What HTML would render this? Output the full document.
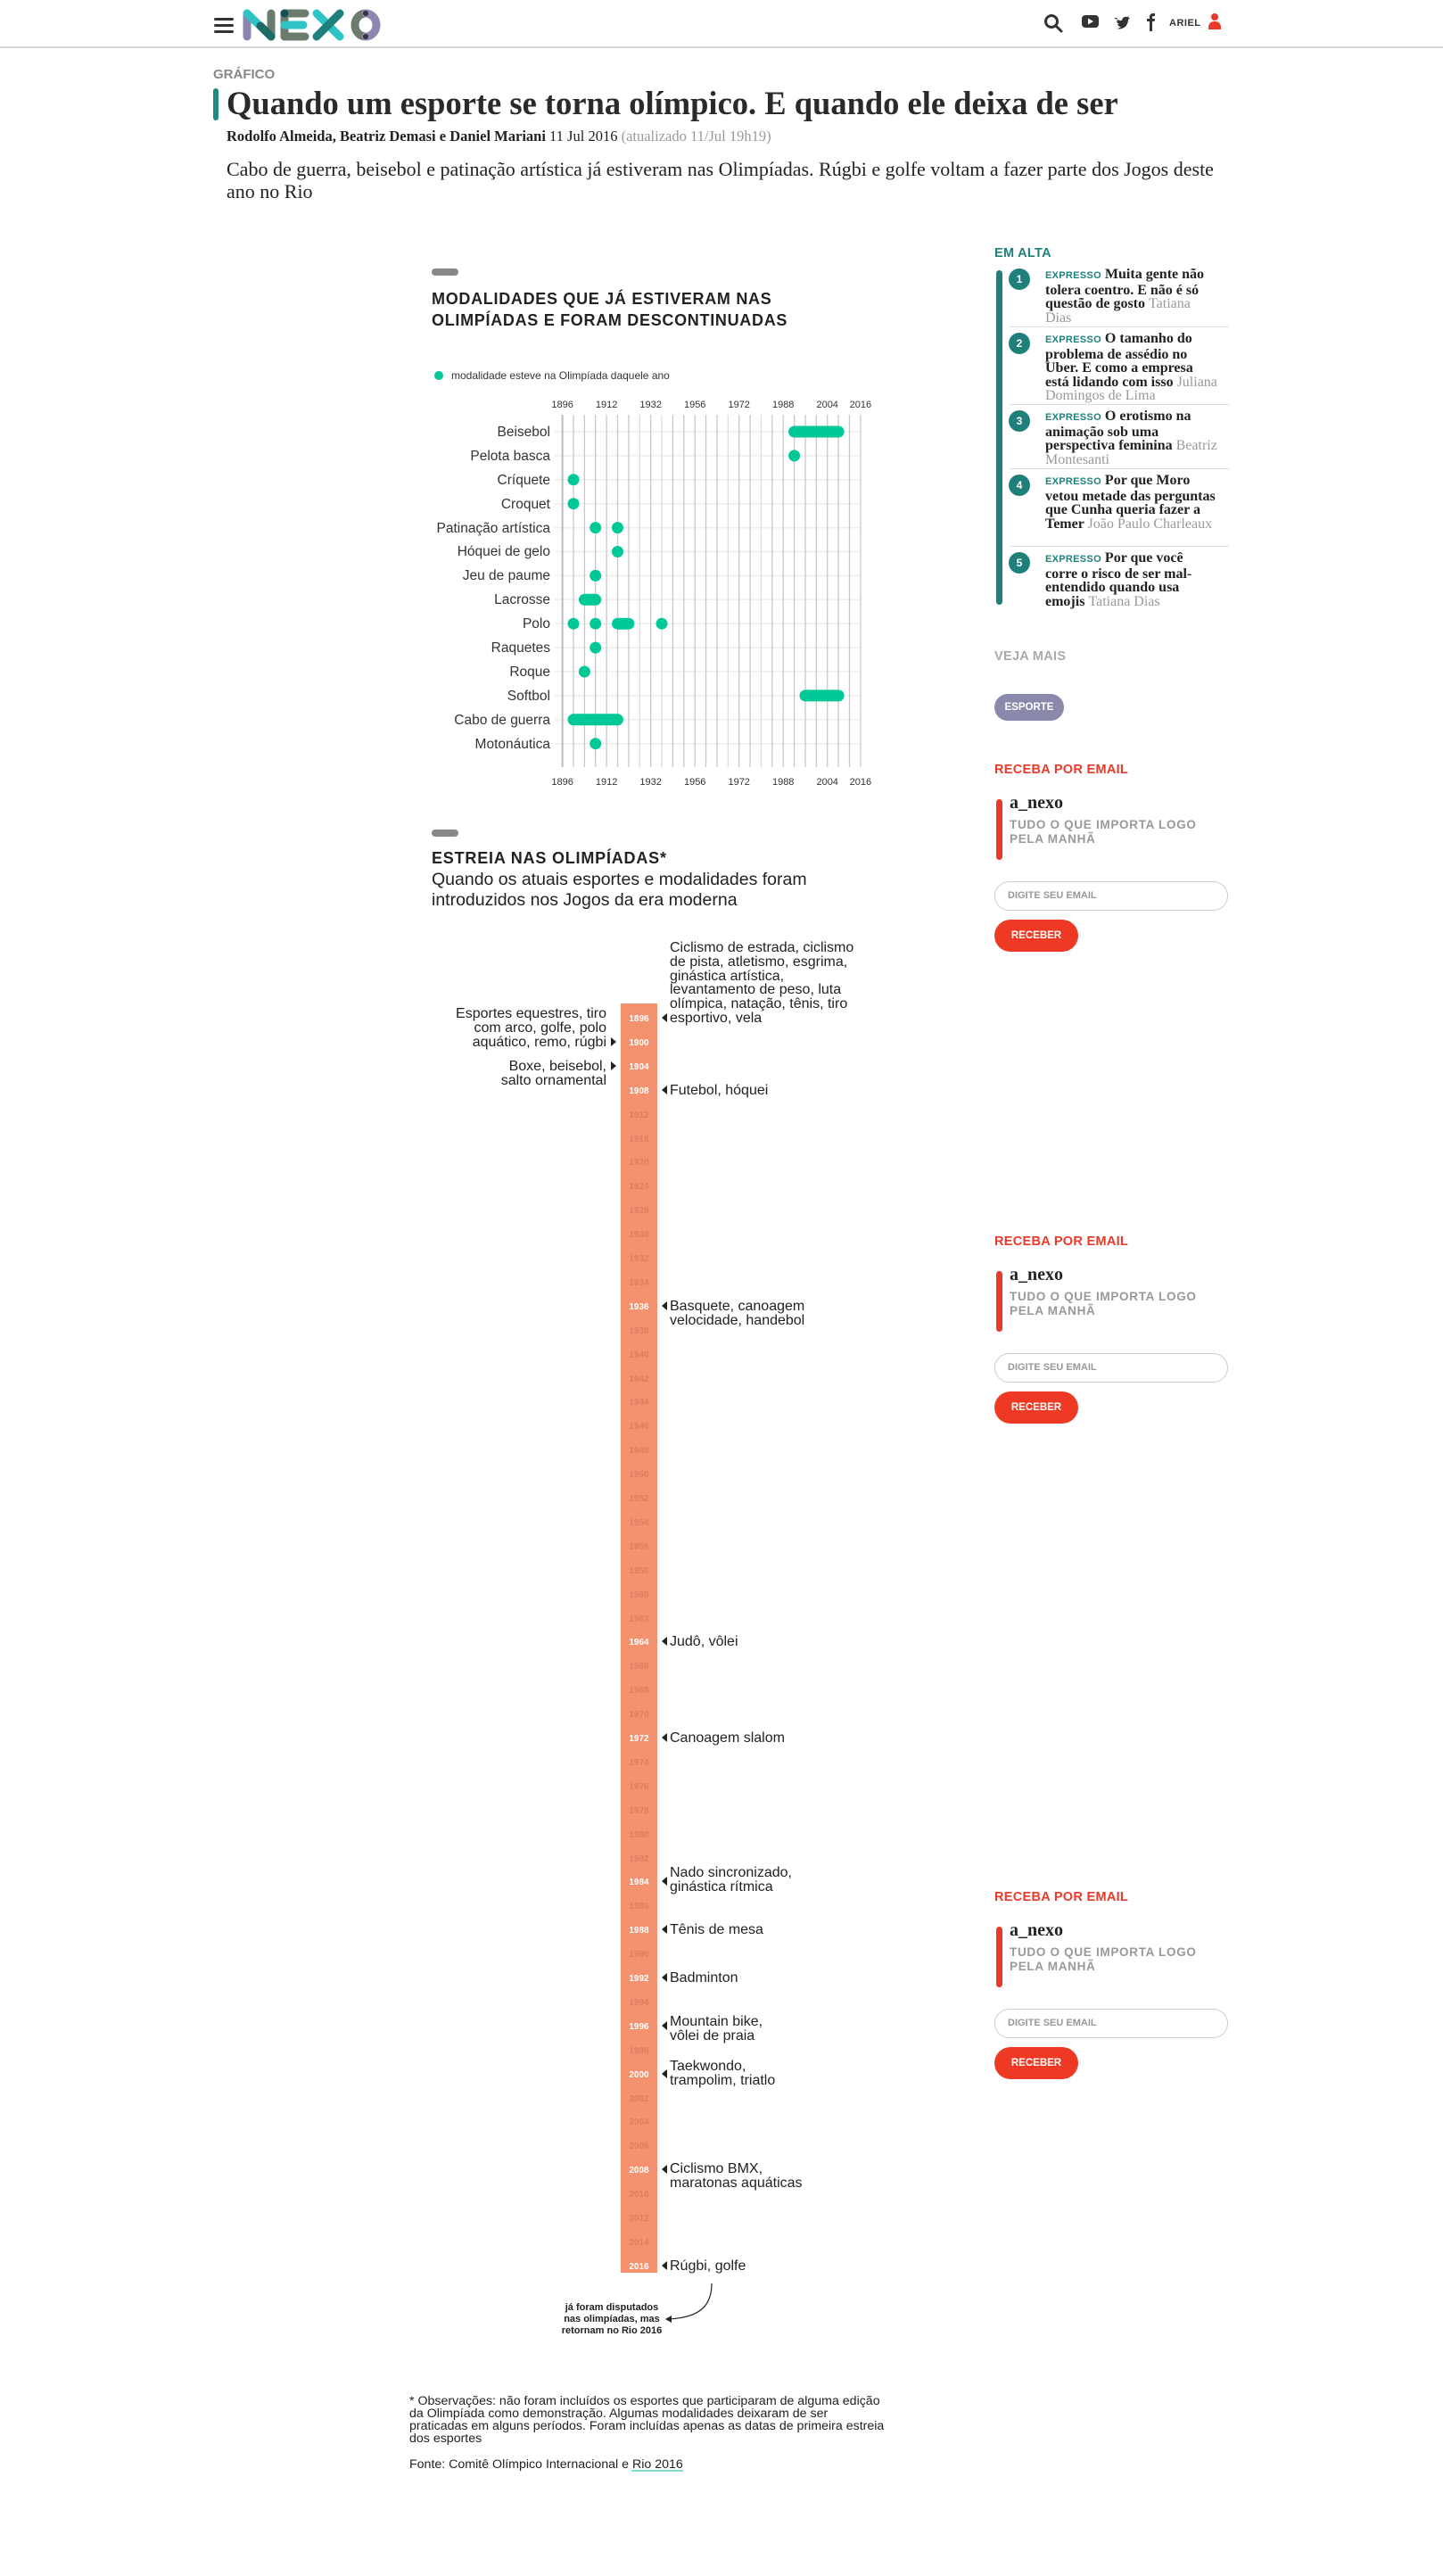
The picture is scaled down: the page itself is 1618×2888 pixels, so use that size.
<!DOCTYPE html>
<html><head><meta charset="utf-8">
<style>
*{margin:0;padding:0;box-sizing:border-box}
body{width:1618px;height:2888px;position:relative;background:#fff;font-family:"Liberation Sans",sans-serif;color:#222;overflow:hidden}
.a{position:absolute}
.serif{font-family:"Liberation Serif",serif}
.hdr{left:0;top:0;width:1618px;height:54px;border-bottom:2px solid #d6d6d6}
.item{position:absolute;left:1172px;width:194px;font-family:"Liberation Serif",serif;font-weight:bold;font-size:16px;line-height:15.5px;color:#222}
.item .ex{font-family:"Liberation Sans",sans-serif;color:#1f7f7a;font-size:11px;letter-spacing:.3px}
.item .au{font-weight:normal;color:#999}
.num{position:absolute;left:1131px;width:24px;height:24px;border-radius:50%;background:#1f7f7a;color:#fff;font-weight:bold;font-size:12px;text-align:center;line-height:24px}
.sep{position:absolute;left:1132px;width:246px;height:1px;background:#ddd}
.h{font-weight:bold;font-size:14.5px;letter-spacing:.3px}
</style></head><body>

<div class="a hdr"></div>
<div class="a" style="left:240px;top:20px;width:22px;height:3px;background:#333;border-radius:2px"></div>
<div class="a" style="left:240px;top:27px;width:22px;height:3px;background:#333;border-radius:2px"></div>
<div class="a" style="left:240px;top:34px;width:22px;height:3px;background:#333;border-radius:2px"></div>
<svg class="a" style="left:268px;top:6px" width="162" height="44" viewBox="0 0 162 44">
 <g stroke-linecap="round" stroke-width="9" fill="none">
  <line x1="9" y1="9" x2="9" y2="35" stroke="#8b87b0"/>
  <line x1="9" y1="9" x2="36" y2="35" stroke="#2ec4c6"/>
  <line x1="36" y1="9" x2="36" y2="35" stroke="#6b7c6f"/>
  <line x1="24" y1="23" x2="36" y2="35" stroke="#1d6b63"/>
  <line x1="51" y1="9" x2="51" y2="35" stroke="#6b7c6f"/>
  <line x1="51" y1="9" x2="74" y2="9" stroke="#6b7c6f"/>
  <line x1="51" y1="22" x2="72" y2="22" stroke="#2ec4c6"/>
  <line x1="51" y1="35" x2="74" y2="35" stroke="#6b7c6f"/>
  <line x1="87" y1="9" x2="113" y2="35" stroke="#2ec4c6"/>
  <line x1="113" y1="9" x2="87" y2="35" stroke="#1f7f7a"/>
  <path d="M142 9 A12 13 0 0 0 142 35" stroke="#6b7c6f"/>
  <path d="M142 9 A12 13 0 0 1 142 35" stroke="#8b87b0"/>
  <circle cx="142" cy="9" r="3" fill="#333" stroke="none"/>
  <circle cx="142" cy="35" r="3" fill="#333" stroke="none"/>
 </g>
 <circle cx="51" cy="9" r="4.5" fill="#134f55"/>
</svg>
<svg class="a" style="left:1170px;top:14px" width="205" height="26" viewBox="0 0 205 26">
 <circle cx="9" cy="10" r="6.5" fill="none" stroke="#333" stroke-width="3"/>
 <line x1="14" y1="15" x2="20" y2="21" stroke="#333" stroke-width="3" stroke-linecap="round"/>
 <rect x="43" y="3" width="19" height="14" rx="4" fill="#333"/>
 <path d="M50 6.5 L56 10 L50 13.5Z" fill="#fff"/>
 <path d="M79 6 c3 2 6 3 9 3 c0-3 3-5 6-4 l2-1 -1 2 2 0 -2 2 c0 7-6 12-13 10 c2 0 4-1 5-2 c-2 0-3-1-4-3 h2 c-2-1-3-2-3-4 l2 1 c-2-2-2-3-1-4z" fill="#333"/>
 <path d="M119 21 V10 H116 V7 H119 V5 C119 2 121 1 123 1 H125 V4 H123.5 C122.5 4 122 4.5 122 5.5 V7 H125 L124.5 10 H122 V21Z" fill="#333"/>
 <text x="141" y="15" font-family="Liberation Sans" font-weight="bold" font-size="11" fill="#333" letter-spacing=".5">ARIEL</text>
 <circle cx="192" cy="5" r="4" fill="#e8392a"/>
 <path d="M185 17 c0-5 3-7 7-7 s7 2 7 7 v2 h-14z" fill="#e8392a"/>
</svg>

<div class="a" style="left:239px;top:75px;font-size:15px;font-weight:bold;color:#888">GRÁFICO</div>
<div class="a" style="left:239px;top:99px;width:6px;height:36px;background:#1f8a80;border-radius:3px"></div>
<div class="a serif" style="left:254px;top:94px;font-size:36.5px;font-weight:bold;color:#2a2a2a;white-space:nowrap">Quando um esporte se torna olímpico. E quando ele deixa de ser</div>
<div class="a serif" style="left:254px;top:143px;font-size:16.5px;white-space:nowrap"><b>Rodolfo Almeida, Beatriz Demasi e Daniel Mariani</b> 11 Jul 2016 <span style="color:#999">(atualizado 11/Jul 19h19)</span></div>
<div class="a serif" style="left:254px;top:177px;width:1110px;font-size:22px;line-height:25px;color:#222">Cabo de guerra, beisebol e patinação artística já estiveram nas Olimpíadas. Rúgbi e golfe voltam a fazer parte dos Jogos deste ano no Rio</div>

<svg class="a" style="left:0;top:0" width="1100" height="2888" viewBox="0 0 1100 2888" font-family="Liberation Sans, sans-serif">
 <rect x="484" y="301" width="30" height="8" rx="4" fill="#888"/>
 <text x="484" y="341" font-size="18" font-weight="bold" fill="#222" letter-spacing=".7">MODALIDADES QUE JÁ ESTIVERAM NAS</text>
 <text x="484" y="365" font-size="18" font-weight="bold" fill="#222" letter-spacing=".7">OLIMPÍADAS E FORAM DESCONTINUADAS</text>
 <circle cx="492" cy="421" r="5" fill="#00c896"/>
 <text x="506" y="425" font-size="12" fill="#333">modalidade esteve na Olimpíada daquele ano</text>
 <g stroke="#eee" stroke-width="1.5">
  <line x1="622" x2="965" y1="484" y2="484"/><line x1="622" x2="965" y1="510.9" y2="510.9"/><line x1="622" x2="965" y1="537.8" y2="537.8"/><line x1="622" x2="965" y1="564.7" y2="564.7"/><line x1="622" x2="965" y1="591.6" y2="591.6"/><line x1="622" x2="965" y1="618.5" y2="618.5"/><line x1="622" x2="965" y1="645.4" y2="645.4"/><line x1="622" x2="965" y1="672.3" y2="672.3"/><line x1="622" x2="965" y1="699.2" y2="699.2"/><line x1="622" x2="965" y1="726.1" y2="726.1"/><line x1="622" x2="965" y1="753" y2="753"/><line x1="622" x2="965" y1="779.9" y2="779.9"/><line x1="622" x2="965" y1="806.8" y2="806.8"/><line x1="622" x2="965" y1="833.7" y2="833.7"/>
 </g>
 <g stroke="#c8c8c8" stroke-width="1.3">
  <line x1="630.6" x2="630.6" y1="465" y2="860" stroke="#bbb" stroke-width="2"/>
  <line x1="643" x2="643" y1="465" y2="860"/><line x1="655.4" x2="655.4" y1="465" y2="860"/><line x1="667.7" x2="667.7" y1="465" y2="860"/><line x1="680.1" x2="680.1" y1="465" y2="860"/><line x1="692.5" x2="692.5" y1="465" y2="860"/><line x1="704.9" x2="704.9" y1="465" y2="860"/><line x1="717.3" x2="717.3" y1="465" y2="860" stroke="#ddd"/><line x1="729.6" x2="729.6" y1="465" y2="860"/><line x1="742" x2="742" y1="465" y2="860" stroke="#ddd"/><line x1="754.4" x2="754.4" y1="465" y2="860"/><line x1="766.8" x2="766.8" y1="465" y2="860"/><line x1="779.2" x2="779.2" y1="465" y2="860"/><line x1="791.5" x2="791.5" y1="465" y2="860"/><line x1="803.9" x2="803.9" y1="465" y2="860"/><line x1="816.3" x2="816.3" y1="465" y2="860" stroke="#ddd"/><line x1="828.7" x2="828.7" y1="465" y2="860"/><line x1="841.1" x2="841.1" y1="465" y2="860"/><line x1="853.4" x2="853.4" y1="465" y2="860" stroke="#ddd"/><line x1="865.8" x2="865.8" y1="465" y2="860"/><line x1="878.2" x2="878.2" y1="465" y2="860"/><line x1="890.6" x2="890.6" y1="465" y2="860"/><line x1="903" x2="903" y1="465" y2="860"/><line x1="915.3" x2="915.3" y1="465" y2="860"/><line x1="927.7" x2="927.7" y1="465" y2="860"/><line x1="940.1" x2="940.1" y1="465" y2="860"/><line x1="952.5" x2="952.5" y1="465" y2="860"/><line x1="964.9" x2="964.9" y1="465" y2="860"/>
 </g>
 <g font-size="11" fill="#333" text-anchor="middle">
  <text x="630.6" y="457">1896</text><text x="680.1" y="457">1912</text><text x="729.6" y="457">1932</text><text x="779.2" y="457">1956</text><text x="828.7" y="457">1972</text><text x="878.2" y="457">1988</text><text x="927.7" y="457">2004</text><text x="964.9" y="457">2016</text>
  <text x="630.6" y="880">1896</text><text x="680.1" y="880">1912</text><text x="729.6" y="880">1932</text><text x="779.2" y="880">1956</text><text x="828.7" y="880">1972</text><text x="878.2" y="880">1988</text><text x="927.7" y="880">2004</text><text x="964.9" y="880">2016</text>
 </g>
 <g font-size="15.5" fill="#333" text-anchor="end">
  <text x="617" y="489">Beisebol</text><text x="617" y="516">Pelota basca</text><text x="617" y="543">Críquete</text><text x="617" y="570">Croquet</text><text x="617" y="597">Patinação artística</text><text x="617" y="623">Hóquei de gelo</text><text x="617" y="650">Jeu de paume</text><text x="617" y="677">Lacrosse</text><text x="617" y="704">Polo</text><text x="617" y="731">Raquetes</text><text x="617" y="758">Roque</text><text x="617" y="785">Softbol</text><text x="617" y="812">Cabo de guerra</text><text x="617" y="839">Motonáutica</text>
 </g>
 <g stroke="#00c896" stroke-width="13" stroke-linecap="round">
  <line x1="890.6" x2="940.1" y1="484" y2="484"/>
  <line x1="890.6" x2="890.6" y1="510.9" y2="510.9"/>
  <line x1="643" x2="643" y1="537.8" y2="537.8"/>
  <line x1="643" x2="643" y1="564.7" y2="564.7"/>
  <line x1="667.7" x2="667.7" y1="591.6" y2="591.6"/><line x1="692.5" x2="692.5" y1="591.6" y2="591.6"/>
  <line x1="692.5" x2="692.5" y1="618.5" y2="618.5"/>
  <line x1="667.7" x2="667.7" y1="645.4" y2="645.4"/>
  <line x1="655.4" x2="667.7" y1="672.3" y2="672.3"/>
  <line x1="643" x2="643" y1="699.2" y2="699.2"/><line x1="667.7" x2="667.7" y1="699.2" y2="699.2"/><line x1="692.5" x2="704.9" y1="699.2" y2="699.2"/><line x1="742" x2="742" y1="699.2" y2="699.2"/>
  <line x1="667.7" x2="667.7" y1="726.1" y2="726.1"/>
  <line x1="655.4" x2="655.4" y1="753" y2="753"/>
  <line x1="903" x2="940.1" y1="779.9" y2="779.9"/>
  <line x1="643" x2="692.5" y1="806.8" y2="806.8"/>
  <line x1="667.7" x2="667.7" y1="833.7" y2="833.7"/>
 </g>

 <rect x="484" y="930" width="30" height="8" rx="4" fill="#888"/>
 <text x="484" y="968" font-size="18" font-weight="bold" fill="#222" letter-spacing=".8">ESTREIA NAS OLIMPÍADAS*</text>
 <text x="484" y="992" font-size="19.5" fill="#222">Quando os atuais esportes e modalidades foram</text>
 <text x="484" y="1015" font-size="19.5" fill="#222">introduzidos nos Jogos da era moderna</text>
 <rect x="696" y="1125" width="41" height="1423" fill="#f4916e"/>
 <g font-size="10" font-weight="bold" text-anchor="middle" fill="#e07c63">
  <text x="716.5" y="1145" fill="#fff">1896</text><text x="716.5" y="1172" fill="#fff">1900</text><text x="716.5" y="1199" fill="#fff">1904</text><text x="716.5" y="1226" fill="#fff">1908</text><text x="716.5" y="1253">1912</text><text x="716.5" y="1280">1916</text><text x="716.5" y="1306">1920</text><text x="716.5" y="1333">1924</text><text x="716.5" y="1360">1928</text><text x="716.5" y="1387">1930</text><text x="716.5" y="1414">1932</text><text x="716.5" y="1441">1934</text><text x="716.5" y="1468" fill="#fff">1936</text><text x="716.5" y="1495">1938</text><text x="716.5" y="1522">1940</text><text x="716.5" y="1549">1942</text><text x="716.5" y="1575">1944</text><text x="716.5" y="1602">1946</text><text x="716.5" y="1629">1948</text><text x="716.5" y="1656">1950</text><text x="716.5" y="1683">1952</text><text x="716.5" y="1710">1954</text><text x="716.5" y="1737">1956</text><text x="716.5" y="1764">1958</text><text x="716.5" y="1791">1960</text><text x="716.5" y="1818">1962</text><text x="716.5" y="1844" fill="#fff">1964</text><text x="716.5" y="1871">1966</text><text x="716.5" y="1898">1968</text><text x="716.5" y="1925">1970</text><text x="716.5" y="1952" fill="#fff">1972</text><text x="716.5" y="1979">1974</text><text x="716.5" y="2006">1976</text><text x="716.5" y="2033">1978</text><text x="716.5" y="2060">1980</text><text x="716.5" y="2087">1982</text><text x="716.5" y="2113" fill="#fff">1984</text><text x="716.5" y="2140">1986</text><text x="716.5" y="2167" fill="#fff">1988</text><text x="716.5" y="2194">1990</text><text x="716.5" y="2221" fill="#fff">1992</text><text x="716.5" y="2248">1994</text><text x="716.5" y="2275" fill="#fff">1996</text><text x="716.5" y="2302">1998</text><text x="716.5" y="2329" fill="#fff">2000</text><text x="716.5" y="2356">2002</text><text x="716.5" y="2382">2004</text><text x="716.5" y="2409">2006</text><text x="716.5" y="2436" fill="#fff">2008</text><text x="716.5" y="2463">2010</text><text x="716.5" y="2490">2012</text><text x="716.5" y="2517">2014</text><text x="716.5" y="2544" fill="#fff">2016</text>
 </g>
 <g fill="#222">
  <path d="M742 1141 l6 -5 v10z"/><path d="M742 1222 l6 -5 v10z"/><path d="M742 1464 l6 -5 v10z"/><path d="M742 1840 l6 -5 v10z"/><path d="M742 1948 l6 -5 v10z"/><path d="M742 2109 l6 -5 v10z"/><path d="M742 2163 l6 -5 v10z"/><path d="M742 2217 l6 -5 v10z"/><path d="M742 2271 l6 -5 v10z"/><path d="M742 2325 l6 -5 v10z"/><path d="M742 2432 l6 -5 v10z"/><path d="M742 2540 l6 -5 v10z"/>
  <path d="M691 1168 l-6 -5 v10z"/><path d="M691 1195 l-6 -5 v10z"/>
 </g>
 <g font-size="16" fill="#222">
  <text x="751" y="1067">Ciclismo de estrada, ciclismo</text>
  <text x="751" y="1083">de pista, atletismo, esgrima,</text>
  <text x="751" y="1099">ginástica artística,</text>
  <text x="751" y="1114">levantamento de peso, luta</text>
  <text x="751" y="1130">olímpica, natação, tênis, tiro</text>
  <text x="751" y="1146">esportivo, vela</text>
  <text x="751" y="1227">Futebol, hóquei</text>
  <text x="751" y="1469">Basquete, canoagem</text><text x="751" y="1485">velocidade, handebol</text>
  <text x="751" y="1845">Judô, vôlei</text>
  <text x="751" y="1953">Canoagem slalom</text>
  <text x="751" y="2104">Nado sincronizado,</text><text x="751" y="2120">ginástica rítmica</text>
  <text x="751" y="2168">Tênis de mesa</text>
  <text x="751" y="2222">Badminton</text>
  <text x="751" y="2271">Mountain bike,</text><text x="751" y="2287">vôlei de praia</text>
  <text x="751" y="2321">Taekwondo,</text><text x="751" y="2337">trampolim, triatlo</text>
  <text x="751" y="2436">Ciclismo BMX,</text><text x="751" y="2452">maratonas aquáticas</text>
  <text x="751" y="2545">Rúgbi, golfe</text>
 </g>
 <g font-size="16" fill="#222" text-anchor="end">
  <text x="680" y="1141">Esportes equestres, tiro</text>
  <text x="680" y="1157">com arco, golfe, polo</text>
  <text x="680" y="1173">aquático, remo, rúgbi</text>
  <text x="680" y="1200">Boxe, beisebol,</text>
  <text x="680" y="1216">salto ornamental</text>
 </g>
 <path d="M798 2560 C798 2585 785 2598 750 2600" fill="none" stroke="#222" stroke-width="1.2"/>
 <path d="M746 2600 l7 -4 v8z" fill="#222"/>
 <g font-size="11" font-weight="bold" fill="#222" text-anchor="middle">
  <text x="686" y="2590">já foram disputados</text>
  <text x="686" y="2603">nas olimpíadas, mas</text>
  <text x="686" y="2616">retornam no Rio 2016</text>
 </g>
 <g font-size="14.2" fill="#222">
  <text x="459" y="2696">* Observações: não foram incluídos os esportes que participaram de alguma edição</text>
  <text x="459" y="2710">da Olimpíada como demonstração. Algumas modalidades deixaram de ser</text>
  <text x="459" y="2724">praticadas em alguns períodos. Foram incluídas apenas as datas de primeira estreia</text>
  <text x="459" y="2738">dos esportes</text>
  <text x="459" y="2767">Fonte: Comitê Olímpico Internacional e Rio 2016</text>
 </g>
 <rect x="708" y="2769" width="58" height="2" fill="#7fdcd8"/>
</svg>

<div class="a h" style="left:1115px;top:276px;color:#1f7f7a">EM ALTA</div>
<div class="a" style="left:1117px;top:303px;width:7px;height:375px;background:#1f7f7a;border-radius:4px"></div>
<div class="num" style="top:301px">1</div>
<div class="item" style="top:300px"><span class="ex">EXPRESSO</span> Muita gente não tolera coentro. E não é só questão de gosto <span class="au">Tatiana Dias</span></div>
<div class="sep" style="top:366px"></div>
<div class="num" style="top:373px">2</div>
<div class="item" style="top:372px"><span class="ex">EXPRESSO</span> O tamanho do problema de assédio no Uber. E como a empresa está lidando com isso <span class="au">Juliana Domingos de Lima</span></div>
<div class="sep" style="top:453px"></div>
<div class="num" style="top:460px">3</div>
<div class="item" style="top:459px"><span class="ex">EXPRESSO</span> O erotismo na animação sob uma perspectiva feminina <span class="au">Beatriz Montesanti</span></div>
<div class="sep" style="top:525px"></div>
<div class="num" style="top:532px">4</div>
<div class="item" style="top:531px"><span class="ex">EXPRESSO</span> Por que Moro vetou metade das perguntas que Cunha queria fazer a Temer <span class="au">João Paulo Charleaux</span></div>
<div class="sep" style="top:612px"></div>
<div class="num" style="top:619px">5</div>
<div class="item" style="top:618px"><span class="ex">EXPRESSO</span> Por que você corre o risco de ser mal-entendido quando usa emojis <span class="au">Tatiana Dias</span></div>

<div class="a h" style="left:1115px;top:728px;color:#aaa">VEJA MAIS</div>
<div class="a" style="left:1115px;top:778px;width:78px;height:30px;border-radius:15px;background:#8a88ab;color:#fff;font-weight:bold;font-size:11.5px;text-align:center;line-height:30px">ESPORTE</div>

<div class="a" style="left:1115px;top:855px;width:270px;height:220px">
 <div class="a h" style="left:0;top:0;color:#e8392a">RECEBA POR EMAIL</div>
 <div class="a" style="left:2px;top:41px;width:7px;height:68px;background:#e8392a;border-radius:4px"></div>
 <div class="a serif" style="left:17px;top:34px;font-size:20px;font-weight:bold;color:#222">a_nexo</div>
 <div class="a" style="left:17px;top:62px;font-size:13.5px;font-weight:bold;color:#999;line-height:16px;letter-spacing:.7px">TUDO O QUE IMPORTA LOGO<br>PELA MANHÃ</div>
 <div class="a" style="left:0;top:133px;width:262px;height:33px;border:1px solid #ccc;border-radius:17px;font-size:11px;font-weight:bold;color:#999;padding-left:14px;line-height:31px">DIGITE SEU EMAIL</div>
 <div class="a" style="left:0;top:176px;width:94px;height:36px;border-radius:18px;background:#ee3a24;color:#fff;font-size:11.5px;font-weight:bold;text-align:center;line-height:36px">RECEBER</div>
</div>
<div class="a" style="left:1115px;top:1384px;width:270px;height:220px">
 <div class="a h" style="left:0;top:0;color:#e8392a">RECEBA POR EMAIL</div>
 <div class="a" style="left:2px;top:41px;width:7px;height:68px;background:#e8392a;border-radius:4px"></div>
 <div class="a serif" style="left:17px;top:34px;font-size:20px;font-weight:bold;color:#222">a_nexo</div>
 <div class="a" style="left:17px;top:62px;font-size:13.5px;font-weight:bold;color:#999;line-height:16px;letter-spacing:.7px">TUDO O QUE IMPORTA LOGO<br>PELA MANHÃ</div>
 <div class="a" style="left:0;top:133px;width:262px;height:33px;border:1px solid #ccc;border-radius:17px;font-size:11px;font-weight:bold;color:#999;padding-left:14px;line-height:31px">DIGITE SEU EMAIL</div>
 <div class="a" style="left:0;top:176px;width:94px;height:36px;border-radius:18px;background:#ee3a24;color:#fff;font-size:11.5px;font-weight:bold;text-align:center;line-height:36px">RECEBER</div>
</div>
<div class="a" style="left:1115px;top:2119px;width:270px;height:220px">
 <div class="a h" style="left:0;top:0;color:#e8392a">RECEBA POR EMAIL</div>
 <div class="a" style="left:2px;top:41px;width:7px;height:68px;background:#e8392a;border-radius:4px"></div>
 <div class="a serif" style="left:17px;top:34px;font-size:20px;font-weight:bold;color:#222">a_nexo</div>
 <div class="a" style="left:17px;top:62px;font-size:13.5px;font-weight:bold;color:#999;line-height:16px;letter-spacing:.7px">TUDO O QUE IMPORTA LOGO<br>PELA MANHÃ</div>
 <div class="a" style="left:0;top:133px;width:262px;height:33px;border:1px solid #ccc;border-radius:17px;font-size:11px;font-weight:bold;color:#999;padding-left:14px;line-height:31px">DIGITE SEU EMAIL</div>
 <div class="a" style="left:0;top:176px;width:94px;height:36px;border-radius:18px;background:#ee3a24;color:#fff;font-size:11.5px;font-weight:bold;text-align:center;line-height:36px">RECEBER</div>
</div>

</body></html>
